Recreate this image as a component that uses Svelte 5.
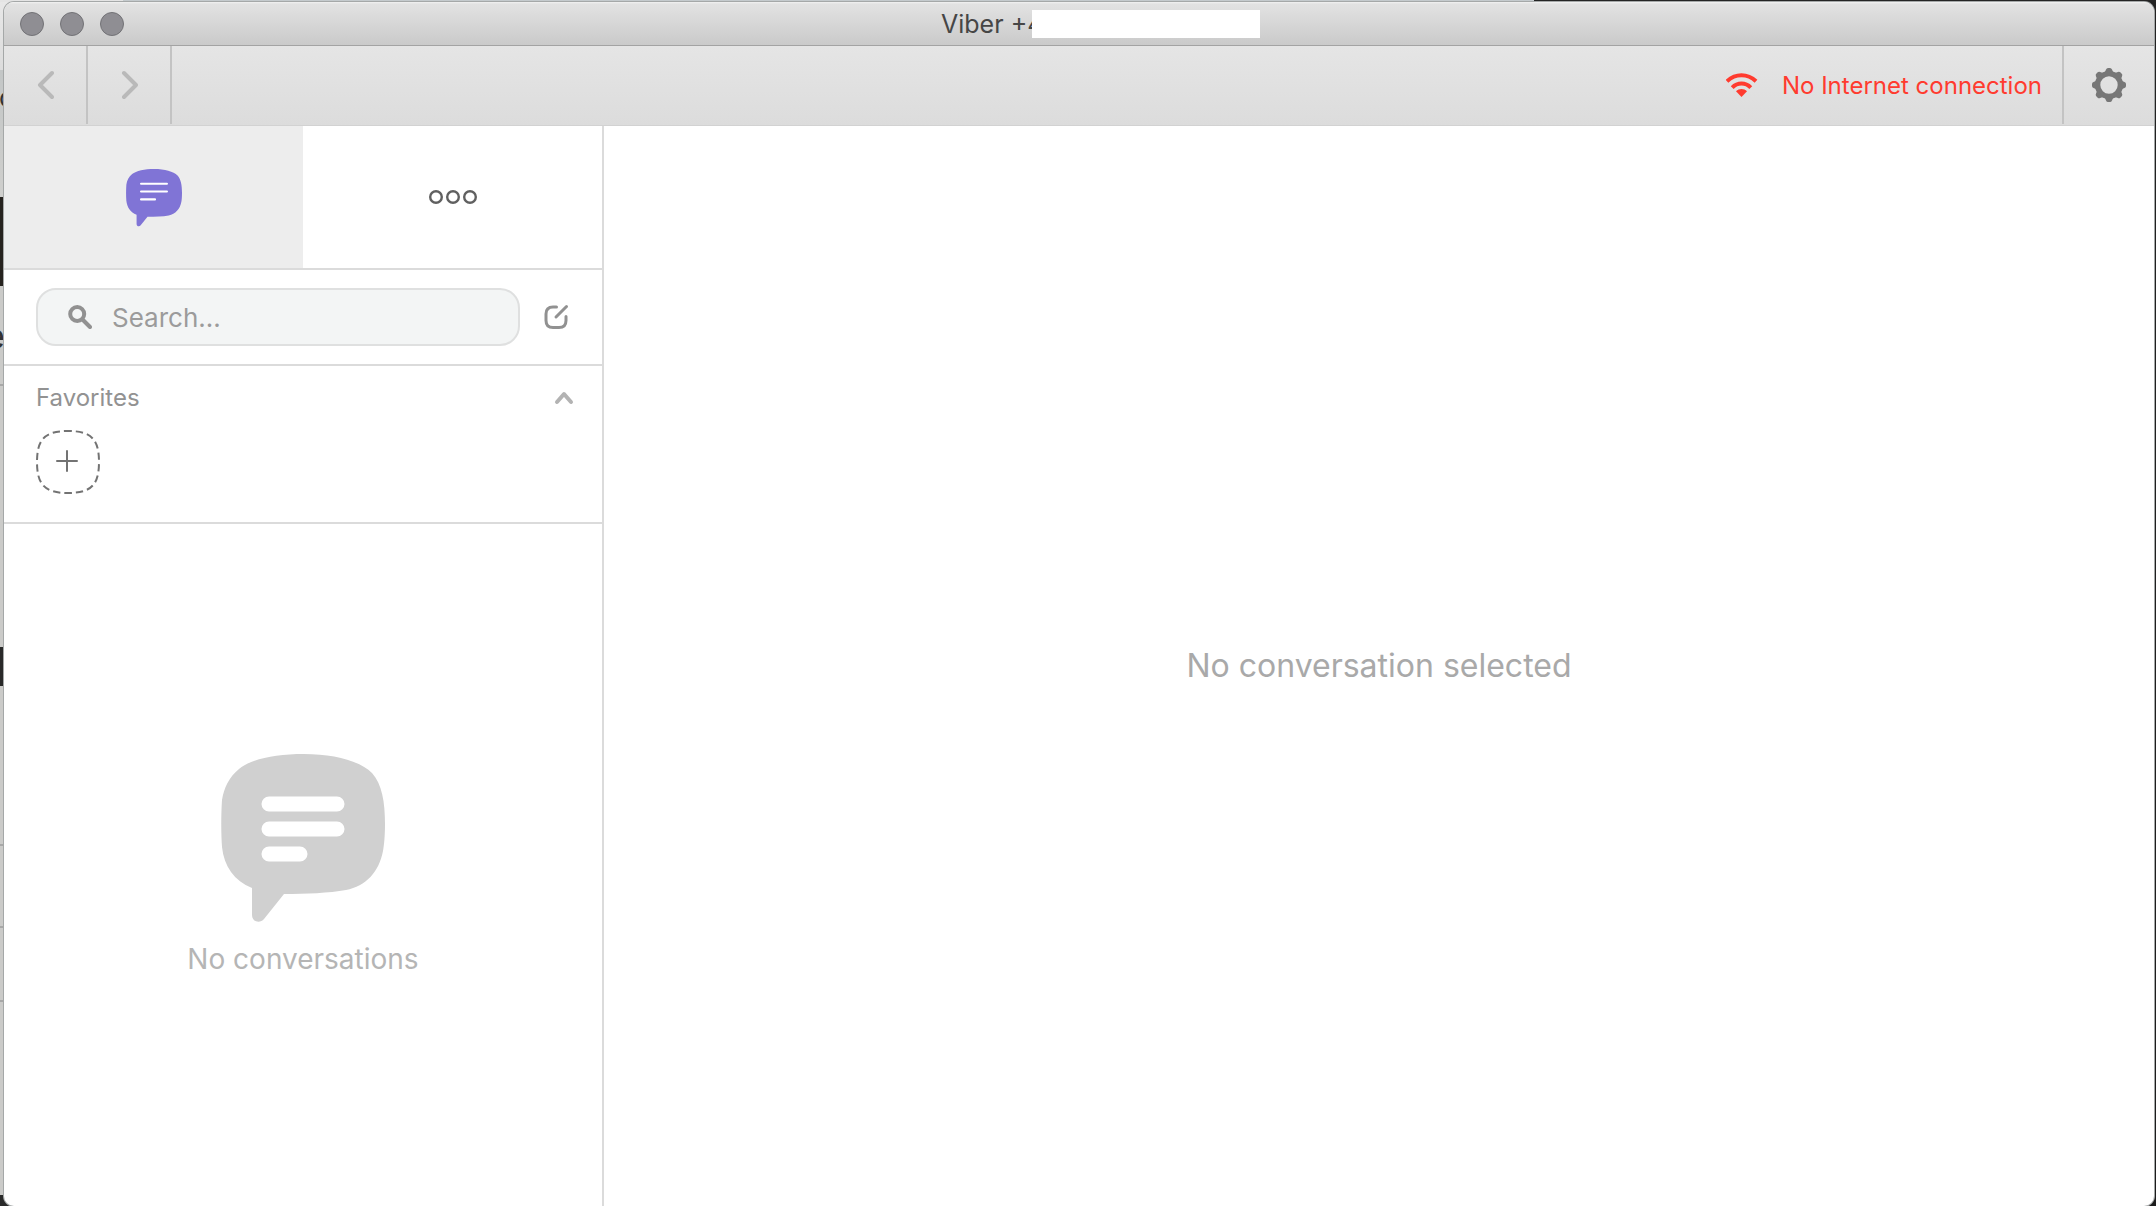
<script lang="ts">
  let search = "";
  let activeTab = "chats";
  let favoritesOpen = true;

  const bubble =
    "M83 0C113 0 139 7 151 19C161 30 164 48 164 70C164 82 163 92 162 97C158 118 145 132 125 136C108 139 85 140 63 140L43 165C39 170 31 168 31 161V134C13 127 3 112 1 93C0 80 0 60 1 46C3 34 8 23 18 15C30 5 54 0 83 0Z";
  const teeth = [0, 45, 90, 135, 180, 225, 270, 315];
</script>

<div class="desktop">
  <div class="behind" aria-hidden="true">
    <span class="letter small">c</span>
    <span class="letter big">e</span>
  </div>

  <div class="window">
    <header class="titlebar">
      <div class="lights">
        <button class="light" aria-label="Close"></button>
        <button class="light" aria-label="Minimize"></button>
        <button class="light" aria-label="Zoom"></button>
      </div>
      <div class="title">Viber +4<span class="mask"></span></div>
    </header>

    <nav class="toolbar">
      <button class="nav-button" aria-label="Back">
        <svg width="18" height="30" viewBox="0 0 18 30">
          <path d="M16 3L4 15L16 27" fill="none" stroke="#b9b9b9" stroke-width="4" stroke-linecap="round" stroke-linejoin="round" />
        </svg>
      </button>
      <button class="nav-button" aria-label="Forward">
        <svg width="18" height="30" viewBox="0 0 18 30">
          <path d="M4 3L16 15L4 27" fill="none" stroke="#b9b9b9" stroke-width="4" stroke-linecap="round" stroke-linejoin="round" />
        </svg>
      </button>
      <div class="status">
        <svg width="32" height="24" viewBox="0 0 32 24">
          <g fill="none" stroke="#ff3b2f" stroke-width="4">
            <path d="M1 8.200C9.500 0.200 21.500 0.200 30 8.200" />
            <path d="M6.200 14.600C11.500 9.200 19.500 9.200 24.800 14.600" />
          </g>
          <path d="M10 18.200C13 15.200 18 15.200 21 18.200L15.500 24Z" fill="#ff3b2f" />
        </svg>
        <span>No Internet connection</span>
      </div>
      <button class="settings" aria-label="Settings">
        <svg width="34" height="34" viewBox="0 0 34 34">
          <circle cx="17" cy="17" r="11.400" fill="none" stroke="#777" stroke-width="5.400" />
          {#each teeth as angle}
            <path d="M12.500 5L14 1.500Q14.600 0 16 0H18Q19.400 0 20 1.500L21.500 5Z" fill="#777" transform="rotate({angle} 17 17)" />
          {/each}
        </svg>
      </button>
    </nav>

    <div class="content">
      <aside class="sidebar">
        <div class="tabs">
          <button
            class="tab"
            class:active={activeTab === "chats"}
            aria-label="Chats"
            on:click={() => (activeTab = "chats")}
          >
            <svg width="56" height="56" viewBox="0 0 164 164" overflow="visible">
              <path d={bubble} fill="#8074d6" />
              <g stroke="#fff" stroke-width="6" stroke-linecap="round">
                <path d="M44 43H120M44 66H120M44 89H85" />
              </g>
            </svg>
          </button>
          <button
            class="tab"
            class:active={activeTab === "more"}
            aria-label="More"
            on:click={() => (activeTab = "more")}
          >
            <svg width="48" height="14" viewBox="0 0 48 14">
              <g fill="none" stroke="#606060" stroke-width="2.4">
                <circle cx="7" cy="7" r="5.8" />
                <circle cx="24" cy="7" r="5.8" />
                <circle cx="41" cy="7" r="5.8" />
              </g>
            </svg>
          </button>
        </div>

        <div class="search-row">
          <label class="search">
            <svg width="24" height="24" viewBox="0 0 24 24">
              <g fill="none" stroke="#919191">
                <circle cx="9.2" cy="9" r="7" stroke-width="4" />
                <path d="M14.500 14.500L22 22" stroke-width="4" stroke-linecap="round" />
              </g>
            </svg>
            <input type="text" placeholder="Search..." aria-label="Search" bind:value={search} />
          </label>
          <button class="compose" aria-label="New message">
            <svg width="26" height="26" viewBox="0 0 26 26">
              <g fill="none" stroke="#919191" stroke-width="3" stroke-linecap="round">
                <path d="M12.500 3H9Q2 3 2 10V16.500Q2 23.500 9 23.500H15Q22 23.500 22 16.500V12.500" />
                <path d="M12 13L22.500 2.500" />
              </g>
            </svg>
          </button>
        </div>

        <section class="favorites">
          <div class="favorites-header">
            <h2>Favorites</h2>
            <button class="collapse" aria-label="Toggle favorites" on:click={() => (favoritesOpen = !favoritesOpen)}>
              <svg width="20" height="14" viewBox="0 0 20 14">
                <path d="M3 11L10 3L17 11" fill="none" stroke="#b3b3b3" stroke-width="4" stroke-linecap="round" stroke-linejoin="round" />
              </svg>
            </button>
          </div>
          {#if favoritesOpen}
            <button class="add" aria-label="Add favorite">
              <svg width="64" height="64" viewBox="0 0 64 64">
                <g fill="none" stroke="#737373" stroke-width="2">
                  <path
                    d="M32 1C55 1 63 9 63 32C63 55 55 63 32 63C9 63 1 55 1 32C1 9 9 1 32 1Z"
                    stroke-dasharray="7.300 4.100"
                    stroke-dashoffset="3.600"
                  />
                  <path d="M21 31H41M31 21V41" stroke-linecap="round" />
                </g>
              </svg>
            </button>
          {/if}
        </section>

        <div class="empty">
          <svg width="164" height="168" viewBox="0 0 164 168">
            <path d={bubble} fill="#d0d0d0" />
            <path d="M48 50H116M48 75H116M48 100H79" stroke="#fff" stroke-width="15" stroke-linecap="round" />
          </svg>
          <p>No conversations</p>
        </div>
      </aside>

      <main class="conversation">
        <p>No conversation selected</p>
      </main>
    </div>
  </div>
</div>

<style>
  :global(body) {
    margin: 0;
  }

  .desktop {
    position: relative;
    box-sizing: border-box;
    min-height: 100vh;
    padding: 2px 2px 0 4px;
    display: flex;
    overflow: hidden;
    font-family: Inter, "Liberation Sans", sans-serif;
    background:
      linear-gradient(90deg, #e4e4e4 123px, #c4cacd 123px, #c4cacd 1534px, #242424 1534px) top / 100% 2px no-repeat,
      linear-gradient(#222, #1c1c1c) right / 20px 100% no-repeat,
      linear-gradient(
        #e8e8e8 0, #dcdcdc 70px, #c3c6c6 70px, #cfcfcd 197px,
        #26231f 197px, #26231f 286px, #cbcbc9 286px, #cbcbc9 384px,
        #a8a8a8 384px, #a8a8a8 386px, #cbcbc9 386px, #cbcbc9 647px,
        #292929 647px, #292929 686px, #cbcbc9 686px, #cbcbc9 844px,
        #a8a8a8 844px, #a8a8a8 846px, #cbcbc9 846px, #cbcbc9 926px,
        #a8a8a8 926px, #a8a8a8 928px, #cbcbc9 928px, #cbcbc9 1000px,
        #a8a8a8 1000px, #a8a8a8 1002px, #cbcbc9 1002px, #cbcbc9 1195px,
        #2a2a2a 1195px
      );
  }

  .behind {
    position: absolute;
    inset: 0;
    color: #333;
  }

  .letter {
    position: absolute;
    line-height: 40px;
  }

  .small {
    left: -1px;
    top: 78px;
    font-size: 26px;
  }

  .big {
    left: -16px;
    top: 316px;
    font-size: 36px;
  }

  .window {
    position: relative;
    flex: 1;
    display: flex;
    flex-direction: column;
    overflow: hidden;
    border-radius: 10px;
    background: #fff;
    box-shadow: 0 0 0 1px #a5a8a8;
  }

  button {
    padding: 0;
    border: 0;
    background: none;
    font: inherit;
  }

  svg {
    display: block;
  }

  .titlebar {
    position: relative;
    display: flex;
    justify-content: center;
    align-items: center;
    box-sizing: border-box;
    height: 44px;
    border-bottom: 1px solid #a3a3a3;
    background: linear-gradient(#f2f2f2, #e2e2e2 2px, #cacaca);
  }

  .lights {
    position: absolute;
    left: 16px;
    display: flex;
    gap: 16px;
  }

  .light {
    width: 24px;
    height: 24px;
    border: 1px solid #727276;
    border-radius: 50%;
    background: #8f8e93;
  }

  .title {
    position: relative;
    width: 276px;
    font-size: 25px;
    line-height: 32px;
    color: #464646;
  }

  .mask {
    position: absolute;
    left: 91px;
    top: 2px;
    width: 228px;
    height: 28px;
    background: #fff;
  }

  .toolbar {
    display: flex;
    box-sizing: border-box;
    height: 80px;
    padding-bottom: 1px;
    border-bottom: 1px solid #d2d2d2;
    background: linear-gradient(#e5e5e5, #dcdcdc);
  }

  .nav-button {
    display: flex;
    align-items: center;
    justify-content: center;
    box-sizing: border-box;
    width: 84px;
    border-right: 2px solid #c3c3c3;
  }

  .status {
    flex: 1;
    display: flex;
    align-items: center;
    justify-content: flex-end;
    gap: 24px;
    padding-right: 20px;
    font-size: 24px;
    color: #ff3b2f;
  }

  .settings {
    display: flex;
    align-items: center;
    justify-content: center;
    box-sizing: border-box;
    width: 92px;
    border-left: 2px solid #c3c3c3;
  }

  .content {
    flex: 1;
    display: flex;
  }

  .sidebar {
    display: flex;
    flex-direction: column;
    box-sizing: border-box;
    width: 600px;
    border-right: 2px solid #dbdbdb;
  }

  .tabs {
    display: flex;
    height: 142px;
    border-bottom: 2px solid #dbdbdb;
  }

  .tab {
    flex: 1;
    display: flex;
    align-items: center;
    justify-content: center;
  }

  .tab.active {
    background: #ededed;
  }

  .search-row {
    display: flex;
    align-items: center;
    gap: 24px;
    padding: 18px 32px;
    border-bottom: 2px solid #dbdbdb;
  }

  .search {
    flex: 1;
    display: flex;
    align-items: center;
    gap: 20px;
    box-sizing: border-box;
    min-width: 0;
    height: 58px;
    padding: 0 30px;
    border: 2px solid #dfe0e0;
    border-radius: 20px;
    background: #f3f5f5;
  }

  .search svg {
    flex-shrink: 0;
  }

  .search input {
    flex: 1;
    min-width: 0;
    padding: 0;
    border: 0;
    outline: 0;
    background: none;
    font: inherit;
    font-size: 26px;
    color: #444;
  }

  .search input::placeholder {
    color: #9b9b9b;
    opacity: 1;
  }

  .favorites {
    box-sizing: border-box;
    padding: 16px 28px 28px 32px;
    border-bottom: 2px solid #dbdbdb;
  }

  .favorites-header {
    display: flex;
    align-items: center;
    justify-content: space-between;
    margin-bottom: 16px;
  }

  .favorites h2 {
    margin: 0;
    font-size: 24px;
    line-height: 32px;
    font-weight: 400;
    color: #929292;
  }

  .add {
    display: block;
  }

  .empty {
    flex: 1;
    display: flex;
    flex-direction: column;
    align-items: center;
    justify-content: center;
    gap: 20px;
  }

  .empty p {
    margin: 0;
    font-size: 28px;
    line-height: 34px;
    color: #b5b5b5;
  }

  .conversation {
    flex: 1;
    display: flex;
    align-items: center;
    justify-content: center;
  }

  .conversation p {
    margin: 0;
    font-size: 32px;
    line-height: 40px;
    color: #a9a9a9;
  }
</style>
